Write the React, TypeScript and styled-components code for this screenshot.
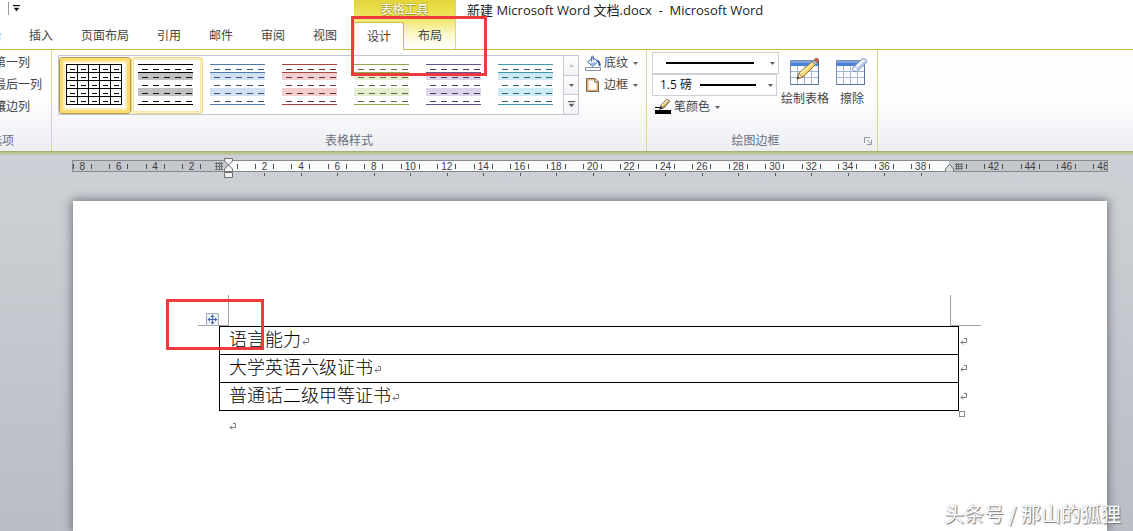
import React from "react";
import styled, { createGlobalStyle, css } from "styled-components";

const uiFont = `"Open Sans", "Noto Sans CJK SC", sans-serif`;
const accent = "#c8be46";

const GlobalStyle = createGlobalStyle`
  * { box-sizing: border-box; }
  body { margin: 0; font-family: ${uiFont}; font-size: 12px; line-height: 16px; color: #444; background: #fff; }
  button, select, input { font: inherit; color: inherit; }
`;

const Window = styled.div`
  display: flex;
  flex-direction: column;
  min-height: 100vh;
  position: relative;
  overflow: hidden;
`;

const buttonReset = css`
  border: 0;
  padding: 0;
  margin: 0;
  background: none;
  white-space: nowrap;
`;

/* Title bar and tabs */

const Header = styled.header`
  display: flex;
  height: 49px;
  flex: none;
`;

const HeaderLeft = styled.div`
  width: 354px;
  flex: none;
  display: flex;
  flex-direction: column;
  justify-content: space-between;
`;

const QuickAccess = styled.div`
  display: flex;
  height: 13px;
  margin: 2px 0 0 8px;
  padding-left: 3px;
  border-left: 1px solid #9a9a9a;
`;

const QuickButton = styled.button`
  ${buttonReset}
  display: flex;
  align-items: center;
`;

const TabRow = styled.nav`
  display: flex;
  justify-content: flex-end;
  height: 27px;
  padding-right: 3px;
  overflow: hidden;
`;

const Tab = styled.button<{ $active?: boolean }>`
  ${buttonReset}
  flex: none;
  height: 27px;
  padding: 0 14px;
  ${(p) =>
    p.$active &&
    css`
      height: 28px;
      padding: 0 12px;
      background: #fff;
      border: 1px solid ${accent};
      border-bottom: 0;
      border-left-color: #e6dfa0;
      border-radius: 3px 3px 0 0;
      position: relative;
      z-index: 1;
    `}
`;

const ContextGroup = styled.div`
  position: relative;
  width: 102px;
  flex: none;
  display: flex;
  flex-direction: column;
  justify-content: space-between;
  background: linear-gradient(#e3d63c 0, #ebe04c 12px, #f1e97c 22px, #faf7c8 34px, #fffffa 46px);
  border-right: 1px solid #ddd48a;
`;

const ContextLabel = styled.div`
  height: 20px;
  line-height: 20px;
  text-align: center;
  color: #fff;
  text-shadow: 0 0 2px #8d8114, 0 1px 1px #a39722;
`;

const ContextTabs = styled.div`
  display: flex;
  height: 27px;
`;

const Title = styled.h1`
  margin: 0;
  padding-left: 11px;
  font-size: 13px;
  line-height: 20px;
  font-weight: 400;
  color: #1c1c1c;
  white-space: pre;
`;

const Highlight = styled.div<{ $w: number; $h: number; $x: number; $y: number }>`
  position: absolute;
  left: ${(p) => p.$x}px;
  top: ${(p) => p.$y}px;
  width: ${(p) => p.$w}px;
  height: ${(p) => p.$h}px;
  border: 3px solid #ee3a3c;
  pointer-events: none;
  z-index: 5;
`;

/* Ribbon */

const Ribbon = styled.section`
  display: flex;
  flex: none;
  height: 102px;
  border-top: 1px solid ${accent};
  background: linear-gradient(#fff 0, #fdfdfe 50px, #eceef2 100%);
`;

const RibbonEdge = styled.div`
  height: 4px;
  flex: none;
  background: linear-gradient(#98a265 0, #b5bf85 1px, #bfc797 3px, #c9ccc0 4px);
`;

const Group = styled.div<{ $width: number; $clip?: boolean }>`
  display: flex;
  flex-direction: column;
  flex: none;
  width: ${(p) => p.$width}px;
  border-right: 1px solid #dcd98c;
  ${(p) => p.$clip && "overflow: hidden; align-items: flex-end;"}
`;

const GroupBody = styled.div<{ $pad: string }>`
  display: flex;
  flex: 1;
  align-items: flex-start;
  padding: ${(p) => p.$pad};
`;

const GroupFooter = styled.div`
  display: flex;
  align-items: center;
  height: 20px;
  color: #6a707c;
  white-space: nowrap;
`;

const GroupLabel = styled.div`
  flex: 1;
  text-align: center;
`;

const ClippedLabel = styled(GroupLabel)`
  padding-right: 37px;
`;

const Stack = styled.div`
  display: flex;
  flex-direction: column;
`;

const ButtonStack = styled(Stack)`
  padding-left: 6px;
  margin-top: -3px;
`;

const CheckLabel = styled.label`
  display: flex;
  align-items: center;
  gap: 4px;
  height: 22px;
  white-space: nowrap;
  input { margin: 0; width: 13px; height: 13px; }
`;

const Gallery = styled.div`
  display: flex;
  height: 60px;
  border: 1px solid #c3c6cc;
  background: #fff;
`;

const StyleItem = styled.button<{ $state?: "selected" | "hover" }>`
  ${buttonReset}
  display: flex;
  align-items: flex-start;
  width: 72px;
  height: 57px;
  margin-top: 1px;
  padding: 7px;
  border-radius: 3px;
  border: 0 solid transparent;
  ${(p) =>
    p.$state === "selected" &&
    "padding: 6px; border: 1px solid #b79a42; box-shadow: inset 0 0 0 3px #fbdc72, inset 0 0 0 5px #fdf0b8;"}
  ${(p) =>
    p.$state === "hover" &&
    "padding: 6px; border: 1px solid #ecd98a; box-shadow: inset 0 0 0 1px #fdf3c4, inset 0 0 0 2px #f8e9a8;"}
`;

const ScrollColumn = styled.div`
  display: flex;
  flex-direction: column;
  width: 15px;
`;

const ScrollButton = styled.button`
  ${buttonReset}
  flex: 1;
  display: flex;
  align-items: center;
  justify-content: center;
  border-left: 1px solid #c8cbd1;
  background: linear-gradient(#fff, #f1f2f5);
  & + & { border-top: 1px solid #c8cbd1; }
`;

const MenuButton = styled.button`
  ${buttonReset}
  display: flex;
  align-items: center;
  height: 22px;
  svg:first-child { margin-right: 3px; }
  svg:last-child { margin-left: 5px; }
`;

const PenColor = styled(MenuButton)`
  padding-left: 3px;
`;

const Picker = styled.div<{ $width: number }>`
  position: relative;
  width: ${(p) => p.$width}px;
  height: 22px;
  select {
    appearance: none;
    width: 100%;
    height: 22px;
    padding: 0 0 0 7px;
    border: 1px solid #cfd1d6;
    border-radius: 0;
    background: #fff;
    color: #111;
  }
`;

const PickerArt = styled.div<{ $gap: number }>`
  position: absolute;
  inset: 0 4px 0 12px;
  display: flex;
  align-items: center;
  justify-content: flex-end;
  gap: ${(p) => p.$gap}px;
  pointer-events: none;
`;

const Stroke = styled.span<{ $length: number }>`
  width: ${(p) => p.$length}px;
  height: 2px;
  background: #000;
`;

const LargeButton = styled.button`
  ${buttonReset}
  display: flex;
  flex-direction: column;
  align-items: center;
  gap: 4px;
`;

const LargeButtons = styled.div`
  display: flex;
  gap: 7px;
  padding: 5px 0 0 2px;
`;

/* Workspace */

const Workspace = styled.main`
  flex: 1;
  display: flex;
  flex-direction: column;
  padding: 5px 25px 0 72px;
  background: linear-gradient(#cdd0d6 0, #cbced3 60px, #b9bdc4 100%);
`;

const Ruler = styled.div`
  position: relative;
  height: 12px;
  border: 1px solid #85888c;
  background: linear-gradient(
    90deg,
    #c4c7cb 156px,
    #fafbfb 156px,
    #fafbfb calc(100% - 158px),
    #c4c7cb calc(100% - 158px)
  );
`;

const Scale = styled.div`
  display: flex;
  height: 18px;
  overflow: hidden;
`;

const ScaleInner = styled.div`
  display: flex;
  flex: 1;
  margin: 0 -14px 0 -9px;
`;

const Cell = styled.div<{ $mark: boolean; $first: boolean }>`
  position: relative;
  flex: 1 1 0;
  min-width: 0;
  display: flex;
  justify-content: center;
  span {
    width: 19px;
    height: 5px;
    margin-top: 3px;
    border: 0 solid #4a4c50;
    border-width: 0 1px 0 ${(p) => (p.$first ? 0 : 1)}px;
    font: 10px/5px "Liberation Sans", Arial, sans-serif;
    color: #3c3e42;
    text-align: center;
  }
  &::after {
    content: "";
    display: ${(p) => (p.$mark ? "block" : "none")};
    position: absolute;
    left: 50%;
    top: 12px;
    width: 1px;
    height: 3px;
    background: #55585c;
  }
`;

const RulerMarker = styled.div<{ $side: "left" | "right" }>`
  position: absolute;
  display: flex;
  ${(p) => (p.$side === "left" ? "left: 142px; top: -4px;" : "right: 144px; top: 0;")}
`;

const GutterBox = styled.div`
  display: flex;
  padding-top: 5px;
  margin-right: 1px;
`;

const Page = styled.article`
  flex: 1;
  margin: 29px 1px 0 1px;
  padding: 94px 156px 0 155px;
  background: #fff;
  box-shadow: 0 0 9px 1px rgba(50, 54, 62, 0.6);
`;

const MarginMarks = styled.div`
  display: flex;
  justify-content: space-between;
  height: 31px;
  margin: 0 -30px;
`;

const Corner = styled.div<{ $side: "left" | "right" }>`
  width: 31px;
  border-bottom: 1px solid #a3a3a3;
  ${(p) => (p.$side === "left" ? "border-right" : "border-left")}: 1px solid #a3a3a3;
`;

const TableRegion = styled.div`
  position: relative;
  display: flex;
  margin: 0 -17px 0 -9px;
`;

const DocTable = styled.table`
  flex: 1;
  border-collapse: collapse;
  color: #000;
  font: 18px/20px "Noto Sans CJK SC", sans-serif;
  font-weight: 300;
  td {
    height: 28px;
    padding: 0 0 5px 9px;
    border: 1px solid #000;
  }
  svg { margin-left: 1px; }
`;

const RowEnds = styled.div`
  width: 9px;
  padding-top: 2px;
  display: flex;
  flex-direction: column;
  justify-content: space-around;
  align-items: flex-end;
`;

const MoveHandle = styled.button`
  ${buttonReset}
  position: absolute;
  left: -13px;
  top: -13px;
  display: flex;
`;

const ResizeHandle = styled.div`
  position: absolute;
  right: 3px;
  bottom: -6px;
  width: 6px;
  height: 6px;
  border: 1px solid #8c8c8c;
  background: #fff;
`;

const EmptyParagraph = styled.p`
  margin: 8px 0 0 1px;
`;

const Watermark = styled.div`
  position: absolute;
  right: 12px;
  bottom: 5px;
  font: 20px/24px "Noto Sans CJK SC", sans-serif;
  word-spacing: normal;
  color: #fff;
  text-shadow: 1px 1px 1px #777, 0 0 1px #999;
`;

/* Drawings */

const Arrow = ({ up, faint }: { up?: boolean; faint?: boolean }) => (
  <svg width="5" height="3" viewBox="0 0 5 3" aria-hidden="true">
    <path d={up ? "M0 3L2.500 0L5 3Z" : "M0 0H5L2.500 3Z"} fill={faint ? "#c4c4c8" : "#5f6168"} />
  </svg>
);

const BarArrow = ({ color = "#5f6168" }: { color?: string }) => (
  <svg width="8" height="8" viewBox="0 0 8 8" aria-hidden="true">
    <path d="M1 0H8V1H1ZM2 3H7L4.500 6Z" fill={color} stroke={color} strokeWidth=".4" />
  </svg>
);

const ReturnMark = () => (
  <svg width="8" height="8" viewBox="0 0 8 8" fill="none" stroke="#777" aria-hidden="true">
    <path d="M4 .5H6.500V4.500H1M3 2.500L1 4.500L3 6.500" />
  </svg>
);

type Palette = { line: string; band: string; dash: string; grid?: boolean };

const StylePreview = ({ line, band, dash, grid }: Palette) => (
  <svg width="56" height="41" viewBox="0 0 56 41" shapeRendering="crispEdges" aria-hidden="true">
    {!grid && <path d="M0 8H55V16H0ZM0 24H55V32H0Z" fill={band} />}
    <path
      d={
        grid
          ? "M0 .5H56M0 8.500H56M0 16.500H56M0 24.500H56M0 32.500H56M0 40.500H56M.5 0V41M11.500 0V41M22.500 0V41M33.500 0V41M44.500 0V41M55.500 0V41"
          : "M0 .5H55M0 8.500H55M0 40.500H55"
      }
      stroke={line}
    />
    <path
      d="M4 5.500H55M4 13.500H55M4 21.500H55M4 29.500H55M4 37.500H55"
      stroke={dash}
      strokeDasharray={grid ? "5 6" : "6 5"}
    />
  </svg>
);

const BucketIcon = () => (
  <svg width="16" height="16" viewBox="0 0 16 16" aria-hidden="true">
    <path d="M2.500 7L8 2.500L13 6.500L8 11.500Z" fill="#e6effb" stroke="#4c6fa8" />
    <path d="M5 8.500L12.500 7L8 11Z" fill="#8fb3e2" />
    <path d="M6.500 6.500V2Q7.500 -.5 8.500 2V5" fill="none" stroke="#4c6fa8" />
    <path d="M11 4.500Q16 5 15.500 11.500Q13 11 13.500 8Z" fill="#2450a4" />
    <path d="M.5 12.500H15.500V15.500H.5Z" fill="#fff" stroke="#8d949d" />
  </svg>
);

const BorderIcon = () => (
  <svg width="16" height="16" viewBox="0 0 16 16" aria-hidden="true">
    <path d="M1.500 1.500H10L13.500 5V14.500H1.500Z" fill="#f0bd78" stroke="#6e675e" />
    <path d="M3 3H9.500V5.500H12V13H3Z" fill="#fff" stroke="#c98a40" strokeWidth=".6" />
    <path d="M10 1.500V5H13.500Z" fill="#fff" stroke="#6e675e" strokeWidth=".8" />
  </svg>
);

const PenIcon = () => (
  <svg width="16" height="16" viewBox="0 0 16 16" aria-hidden="true">
    <path d="M0 11H16V15H0Z" fill="#000" />
    <path d="M0 8.500H5" stroke="#000" />
    <path d="M5 10L6 6L12 0L15 2L9 9Z" fill="#efe2b4" stroke="#6b5f3c" strokeWidth=".8" />
    <path d="M9 9L15 2.500L14 1.500L7 8Z" fill="#a8965a" />
    <path d="M4 11L6 7L8 9Z" fill="#222" />
  </svg>
);

const TableArt = () => (
  <>
    <path d="M.5 3.500H28.500V27.500H.5Z" fill="#fbfcff" stroke="#7b8fb4" />
    <path d="M1 4H28V9H1Z" fill="#4a80d4" />
    <path d="M1 4H28V6H1Z" fill="#79a5e8" />
    <path d="M1 14.500H28M1 20.500H28M7.500 9V27M14.500 9V27M21.500 9V27" stroke="#a9b7d4" />
    <path d="M.5 27.500H28.500V4" fill="none" stroke="#5d7099" />
  </>
);

const DrawTableIcon = () => (
  <svg width="30" height="30" viewBox="0 0 30 30" aria-hidden="true">
    <TableArt />
    <path d="M7 22L9 16L24 3L27 6L13 20Z" fill="#f4cf67" stroke="#7d6228" strokeWidth=".8" />
    <path d="M10 16L24 4L25 5L11 18Z" fill="#fdeeb0" />
    <path d="M7 22L9 16.500L12.500 20Z" fill="#f7e6c6" stroke="#6b5a3c" strokeWidth=".6" />
    <path d="M7 22L8 19.500L9.500 21Z" fill="#222" />
    <path d="M23 4L25.500 1.500Q28 .5 28.500 3Q29 4 27 6.500Z" fill="#d0574c" stroke="#7a4a3c" strokeWidth=".7" />
    <path d="M22 5L24 3L27.500 6L25.500 8Z" fill="#b7bcc6" stroke="#707683" strokeWidth=".6" />
  </svg>
);

const EraserIcon = () => (
  <svg width="32" height="30" viewBox="0 0 32 30" aria-hidden="true">
    <TableArt />
    <path
      d="M17 10.500L25.500 2.500Q27 1.500 28.500 2L30 2.500Q31.500 3.500 30.500 5.500L21.500 14Q20.500 15 19 14.500L17.500 14Q15.500 12.500 17 10.500Z"
      fill="#f3f7fd"
      stroke="#6e86ad"
    />
    <path d="M21.500 10.500L30 3Q31.500 4 30 6L21.500 13.500Q22.500 12 21.500 10.500Z" fill="#b4c8e6" />
    <path d="M17 10.500Q18 9.500 20 10Q22 10.500 21.500 13.500" fill="none" stroke="#8ea5ca" strokeWidth=".8" />
  </svg>
);

const LauncherIcon = () => (
  <svg width="13" height="8" viewBox="0 0 13 8" fill="none" stroke="#9093a0" aria-hidden="true">
    <path d="M.5 6V.5H6M3.500 3L6.500 6.500M7.500 3V7.500H3" />
  </svg>
);

const GutterIcon = () => (
  <svg width="8" height="8" viewBox="0 0 8 8" stroke="#6c6e72" shapeRendering="crispEdges">
    <path d="M0 1.500H8M0 4.500H8M0 7.500H8M1.500 0V8M4.500 0V8M6.500 0V8" />
  </svg>
);

const IndentIcon = () => (
  <svg width="9" height="22" viewBox="0 0 9 22" fill="#f3f3f3" stroke="#6d7075">
    <path d="M.5 1.500H8.500V4L4.500 8L.5 4Z" />
    <path d="M4.500 8L8.500 12V14.500H.5V12Z" />
    <path d="M.5 15.500H8.500V20.500H.5Z" />
  </svg>
);

const RightIndentIcon = () => (
  <svg width="18" height="11" viewBox="0 0 18 11">
    <path d="M.5 10.500V8L4.500 3L8.500 8V10.500" fill="#ddd" stroke="#6d7075" />
    <path
      d="M10 3.500H18M10 5.500H18M10 7.500H18M11.500 2V9M13.500 2V9M16.500 2V9"
      stroke="#6c6e72"
      shapeRendering="crispEdges"
    />
  </svg>
);

const MoveIcon = () => (
  <svg width="13" height="13" viewBox="0 0 13 13" aria-hidden="true">
    <path d="M.5 .5H12.500V12.500H.5Z" fill="#eef3fb" stroke="#a6aebb" />
    <path d="M6.500 3V10M3 6.500H10" stroke="#3d62a8" />
    <path
      d="M6.500 1.500L8.500 4H4.500ZM6.500 11.500L8.500 9H4.500ZM1.500 6.500L4 4.500V8.500ZM11.500 6.500L9 4.500V8.500Z"
      fill="#3d62a8"
    />
  </svg>
);

/* Data */

const tabs = ["开始", "插入", "页面布局", "引用", "邮件", "审阅", "视图"];

const tableStyles: (Palette & { name: string; state?: "selected" | "hover" })[] = [
  { name: "网格型", line: "#000", band: "#fff", dash: "#000", grid: true, state: "selected" },
  { name: "浅色底纹", line: "#000", band: "#c0c0c0", dash: "#111", state: "hover" },
  { name: "浅色底纹 1", line: "#5279ac", band: "#d0dff2", dash: "#3a5578" },
  { name: "浅色底纹 2", line: "#a94442", band: "#f2cfcf", dash: "#6e2c2c" },
  { name: "浅色底纹 3", line: "#8faa4c", band: "#e4edcf", dash: "#5f6f3a" },
  { name: "浅色底纹 4", line: "#6c5494", band: "#dcd4e8", dash: "#4a3a66" },
  { name: "浅色底纹 5", line: "#3f9aad", band: "#cdeaf3", dash: "#2d6470" },
];

const rows = ["语言能力", "大学英语六级证书", "普通话二级甲等证书"];

const rulerValues = Array.from({ length: 29 }, (_, i) => i * 2 - 8);

export default function App() {
  return (
    <Window>
      <GlobalStyle />
      <Header>
        <HeaderLeft>
          <QuickAccess>
            <QuickButton aria-label="自定义快速访问工具栏">
              <BarArrow color="#111" />
            </QuickButton>
          </QuickAccess>
          <TabRow>
            {tabs.map((t) => (
              <Tab key={t}>{t}</Tab>
            ))}
          </TabRow>
        </HeaderLeft>
        <ContextGroup>
          <ContextLabel>表格工具</ContextLabel>
          <ContextTabs>
            <Tab $active>设计</Tab>
            <Tab>布局</Tab>
          </ContextTabs>
          <Highlight $x={-3} $y={16} $w={136} $h={60} />
        </ContextGroup>
        <Title>{"新建 Microsoft Word 文档.docx  -  Microsoft Word"}</Title>
      </Header>

      <Ribbon>
        <Group $width={52} $clip>
          <GroupBody $pad="2px 9px 0 0">
            <Stack>
              {["第一列", "最后一列", "镶边列"].map((t) => (
                <CheckLabel key={t}>
                  <input type="checkbox" />
                  {t}
                </CheckLabel>
              ))}
            </Stack>
          </GroupBody>
          <GroupFooter>
            <ClippedLabel>表格样式选项</ClippedLabel>
          </GroupFooter>
        </Group>

        <Group $width={595}>
          <GroupBody $pad="5px 0 0 6px">
            <Gallery>
              {tableStyles.map(({ name, state, ...palette }) => (
                <StyleItem key={name} $state={state} aria-label={name}>
                  <StylePreview {...palette} />
                </StyleItem>
              ))}
              <ScrollColumn>
                <ScrollButton aria-label="上一行">
                  <Arrow up faint />
                </ScrollButton>
                <ScrollButton aria-label="下一行">
                  <Arrow />
                </ScrollButton>
                <ScrollButton aria-label="其他">
                  <BarArrow />
                </ScrollButton>
              </ScrollColumn>
            </Gallery>
            <ButtonStack>
              <MenuButton>
                <BucketIcon />
                底纹
                <Arrow />
              </MenuButton>
              <MenuButton>
                <BorderIcon />
                边框
                <Arrow />
              </MenuButton>
            </ButtonStack>
          </GroupBody>
          <GroupFooter>
            <GroupLabel>表格样式</GroupLabel>
          </GroupFooter>
        </Group>

        <Group $width={231}>
          <GroupBody $pad="2px 0 0 5px">
            <Stack>
              <Picker $width={127}>
                <select aria-label="笔样式">
                  <option value="single" />
                </select>
                <PickerArt $gap={16}>
                  <Stroke $length={88} />
                  <Arrow />
                </PickerArt>
              </Picker>
              <Picker $width={125}>
                <select aria-label="笔划粗细">
                  <option>1.5 磅</option>
                </select>
                <PickerArt $gap={12}>
                  <Stroke $length={56} />
                  <Arrow />
                </PickerArt>
              </Picker>
              <PenColor>
                <PenIcon />
                笔颜色
                <Arrow />
              </PenColor>
            </Stack>
            <LargeButtons>
              <LargeButton>
                <DrawTableIcon />
                绘制表格
              </LargeButton>
              <LargeButton>
                <EraserIcon />
                擦除
              </LargeButton>
            </LargeButtons>
          </GroupBody>
          <GroupFooter>
            <GroupLabel>绘图边框</GroupLabel>
            <QuickButton aria-label="边框和底纹">
              <LauncherIcon />
            </QuickButton>
          </GroupFooter>
        </Group>
      </Ribbon>
      <RibbonEdge />

      <Workspace>
        <Ruler>
          <Scale>
            <ScaleInner>
              {rulerValues.map((v) => (
                <Cell key={v} $mark={v > 0 && v < 40} $first={v === 0 || v === 40}>
                  <span>{v === 0 || v === 40 ? "" : Math.abs(v)}</span>
                </Cell>
              ))}
            </ScaleInner>
          </Scale>
          <RulerMarker $side="left">
            <GutterBox>
              <GutterIcon />
            </GutterBox>
            <IndentIcon />
          </RulerMarker>
          <RulerMarker $side="right">
            <RightIndentIcon />
          </RulerMarker>
        </Ruler>

        <Page>
          <MarginMarks>
            <Corner $side="left" />
            <Corner $side="right" />
          </MarginMarks>
          <TableRegion>
            <DocTable>
              <tbody>
                {rows.map((r) => (
                  <tr key={r}>
                    <td>
                      {r}
                      <ReturnMark />
                    </td>
                  </tr>
                ))}
              </tbody>
            </DocTable>
            <RowEnds>
              {rows.map((r) => (
                <ReturnMark key={r} />
              ))}
            </RowEnds>
            <MoveHandle aria-label="移动表格">
              <MoveIcon />
            </MoveHandle>
            <ResizeHandle />
            <Highlight $x={-53} $y={-27} $w={98} $h={51} />
          </TableRegion>
          <EmptyParagraph>
            <ReturnMark />
          </EmptyParagraph>
        </Page>
      </Workspace>
      <Watermark>头条号 / 那山的狐狸</Watermark>
    </Window>
  );
}
